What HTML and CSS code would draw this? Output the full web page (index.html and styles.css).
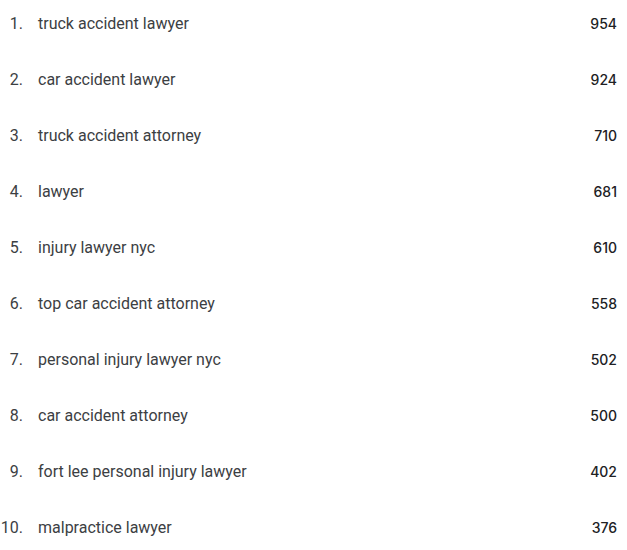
FILE: index.html
```html
<!DOCTYPE html>
<html>
<head>
<meta charset="utf-8">
<link rel="stylesheet" href="styles.css">
</head>
<body>
<ol class="list">
  <li class="row"><span class="idx">1.</span><span class="label">truck accident lawyer</span><span class="val">954</span></li>
  <li class="row"><span class="idx">2.</span><span class="label">car accident lawyer</span><span class="val">924</span></li>
  <li class="row"><span class="idx">3.</span><span class="label">truck accident attorney</span><span class="val">710</span></li>
  <li class="row"><span class="idx">4.</span><span class="label">lawyer</span><span class="val">681</span></li>
  <li class="row"><span class="idx">5.</span><span class="label">injury lawyer nyc</span><span class="val">610</span></li>
  <li class="row"><span class="idx">6.</span><span class="label">top car accident attorney</span><span class="val">558</span></li>
  <li class="row"><span class="idx">7.</span><span class="label">personal injury lawyer nyc</span><span class="val">502</span></li>
  <li class="row"><span class="idx">8.</span><span class="label">car accident attorney</span><span class="val">500</span></li>
  <li class="row"><span class="idx">9.</span><span class="label">fort lee personal injury lawyer</span><span class="val">402</span></li>
  <li class="row"><span class="idx">10.</span><span class="label">malpractice lawyer</span><span class="val">376</span></li>
</ol>
</body>
</html>
```
FILE: styles.css
```css
html, body {
  margin: 0;
  padding: 0;
  background: #ffffff;
}
.list {
  list-style: none;
  margin: 0;
  padding: 0 10px 0 0;
  display: flex;
  flex-direction: column;
  gap: 10px;
}
.row {
  height: 46px;
  display: flex;
  align-items: center;
  font-family: Roboto, "Liberation Sans", sans-serif;
  font-size: 16px;
  color: #3c4043;
}
.idx {
  width: 23px;
  text-align: right;
  flex: none;
}
.label {
  margin-left: 15px;
  flex: 1;
}
.val {
  font-family: Inter, Roboto, sans-serif;
  font-size: 14px;
  font-weight: 500;
  color: #202124;
}
```
